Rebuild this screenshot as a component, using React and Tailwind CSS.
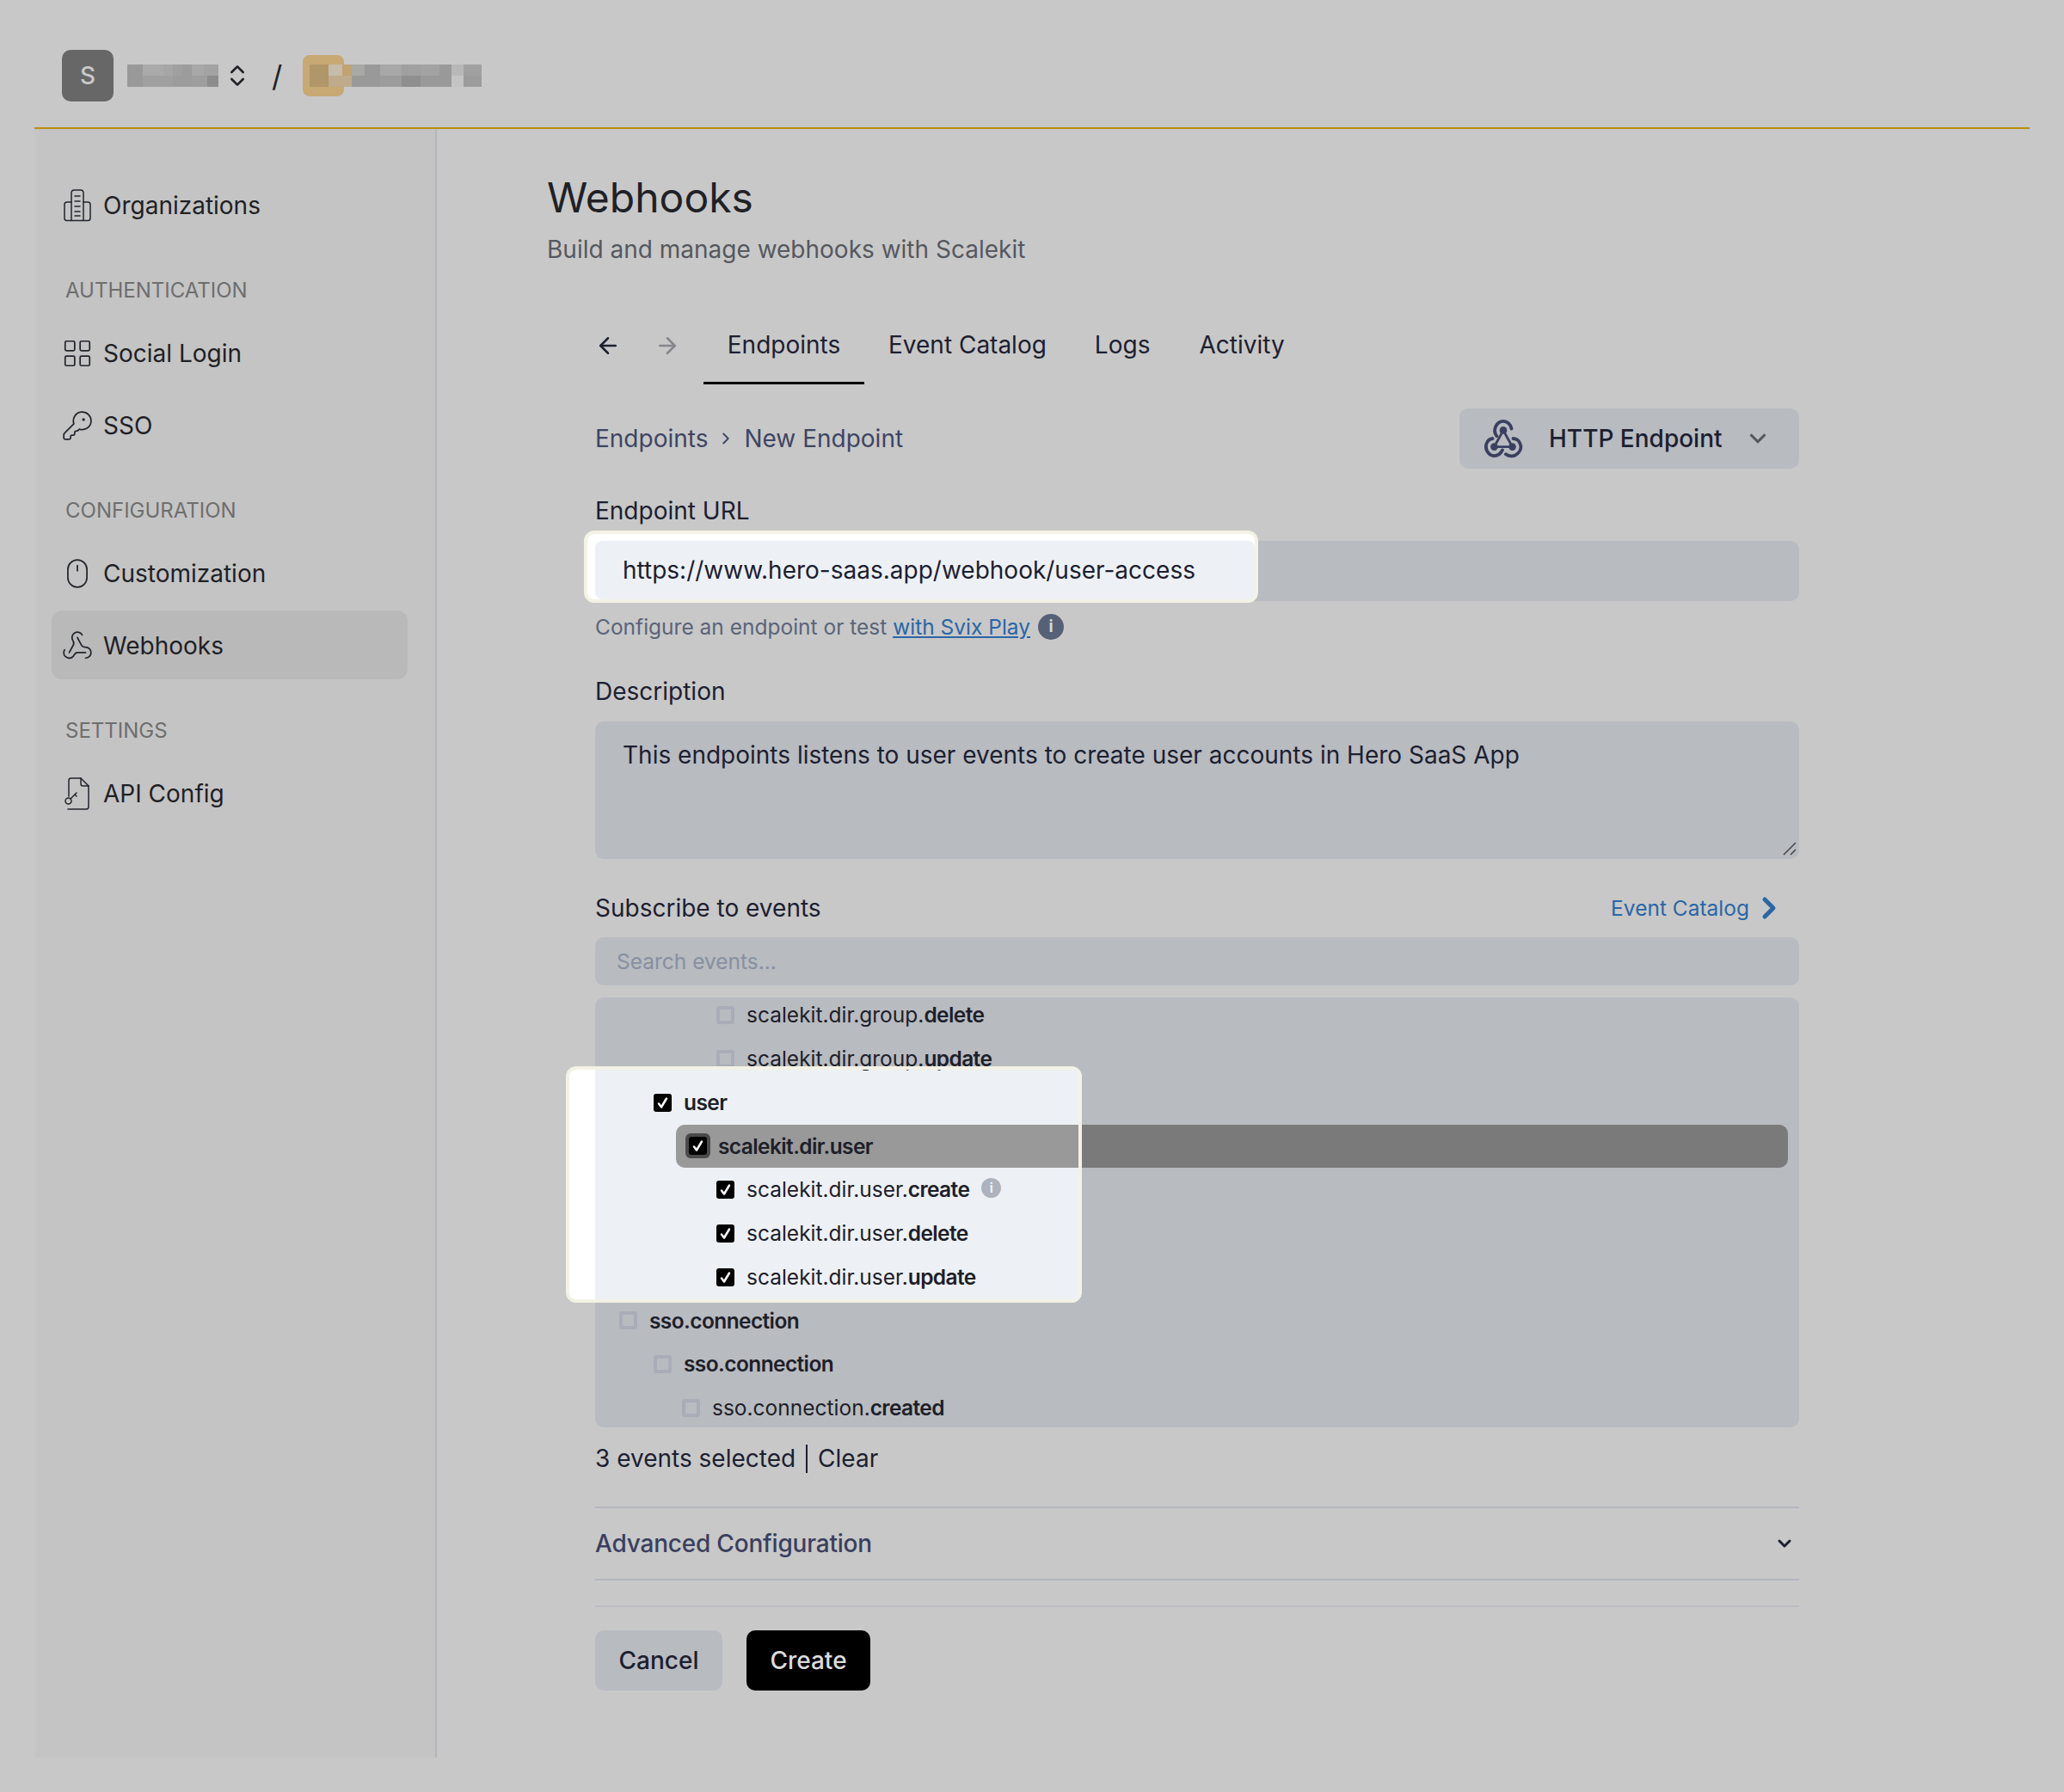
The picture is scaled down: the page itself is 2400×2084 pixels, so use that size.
import { ArrowLeft, ArrowRight, ChevronDown, ChevronRight, ChevronsUpDown, KeyRound, LayoutGrid, Mouse, Webhook } from "lucide-react";

const STRIP_A = [
  [18, "#999999", "#999999"],
  [24, "#aaaaaa", "#a0a0a0"],
  [11, "#a6a6a6", "#a0a0a0"],
  [11, "#a0a0a0", "#9c9c9c"],
  [11, "#9c9c9c", "#9c9c9c"],
  [14, "#a8a8a8", "#9e9e9e"],
  [4, "#a3a3a3", "#9e9e9e"],
  [13, "#a3a3a3", "#8c8c8c"],
];

const STRIP_B = [
  [22, "#b09668", "#b09668"],
  [16, "#c5bda9", "#bfab8b"],
  [11, "#c2a26e", "#bfab8b"],
  [15, "#a8a8a8", "#999999"],
  [18, "#999999", "#999999"],
  [25, "#a8a8a8", "#9c9c9c"],
  [22, "#a0a0a0", "#8f8f8f"],
  [22, "#a3a3a3", "#999999"],
  [14, "#999999", "#999999"],
  [14, "#b8b8b8", "#c4c4c4"],
  [21, "#a0a0a0", "#9c9c9c"],
];

const ROWS = [
  { pad: "pl-[141px]", base: "scalekit.dir.group.", strong: "delete" },
  { pad: "pl-[141px]", base: "scalekit.dir.group.", strong: "update" },
  { pad: "pl-[68px]", strong: "user", checked: true },
  { active: true, strong: "scalekit.dir.user", checked: true },
  { pad: "pl-[141px]", base: "scalekit.dir.user.", strong: "create", checked: true, info: true },
  { pad: "pl-[141px]", base: "scalekit.dir.user.", strong: "delete", checked: true },
  { pad: "pl-[141px]", base: "scalekit.dir.user.", strong: "update", checked: true },
  { pad: "pl-[28px]", strong: "sso.connection" },
  { pad: "pl-[68px]", strong: "sso.connection" },
  { pad: "pl-[101px]", base: "sso.connection.", strong: "created" },
];

function Mosaic({ cells }) {
  return (
    <div className="flex">
      {cells.map(([w, top, bottom], i) => (
        <div key={i} className="flex flex-col" style={{ width: w }}>
          <div className="h-[13px]" style={{ background: top }} />
          <div className="h-[13px]" style={{ background: bottom }} />
        </div>
      ))}
    </div>
  );
}

function BuildingIcon() {
  return (
    <svg viewBox="0 0 32 38" className="h-[38px] w-[32px]" fill="none" stroke="#22252c" strokeWidth="1.5" strokeLinejoin="round" strokeLinecap="round">
      <path d="M9 36.5V4.5C9 2.5 10.5 1 12.5 1h7C21.5 1 23 2.5 23 4.5V36.5" />
      <path d="M9 15H4c-1.7 0-3 1.3-3 3v15.5C1 35 2 36.5 3.5 36.5h25c1.5 0 2.500-1.500 2.500-3V18c0-1.7-1.3-3-3-3h-5" />
      <path d="M13 8h6M13 14h6M13 20h6M13 26h6M13 31h6" />
    </svg>
  );
}

function FileKeyIcon() {
  return (
    <svg viewBox="0 0 30 38" className="h-[38px] w-[30px]" fill="none" stroke="#22252c" strokeWidth="1.5" strokeLinejoin="round" strokeLinecap="round">
      <path d="M5 22V3.5C5 2 6 1 7.5 1H19l9 9v24c0 1.8-1 3-2.5 3H4" />
      <path d="M19 1v6.5c0 1.5 1 2.5 2.5 2.5H28" />
      <circle cx="4.5" cy="27.5" r="3.5" />
      <path d="M7 25l7-7M12 20l2 2" />
    </svg>
  );
}

function WebhookBadge() {
  return (
    <svg viewBox="0 0 48 48" className="h-[46px] w-[46px]" fill="none" stroke="#3b4060" strokeWidth="4" strokeLinecap="round">
      <path d="M24 14L13 34L35 34Z" strokeWidth="3" />
      <circle cx="24" cy="14" r="4.5" fill="#3b4060" stroke="none" />
      <circle cx="13" cy="34" r="4.5" fill="#3b4060" stroke="none" />
      <circle cx="35" cy="34" r="4.5" fill="#3b4060" stroke="none" />
      <path d="M16 21C13 17 13 13 15 9C17 5 21 3 24 3C29 3 33 7 34 12" />
      <path d="M11 24C5 25 3 30 3 34C3 40 8 45 13 45C18 45 21 42 23 38" />
      <path d="M27 43C30 45 35 46 39 44C44 41 46 36 45 32C44 27 40 24 36 24" />
    </svg>
  );
}

function NavItem({ icon, label, active }) {
  return (
    <div className={`flex h-[80px] items-center gap-[14px] rounded-[12px] pl-[14px] pt-[1px] text-[28px] text-[#1f2126] ${active ? "bg-[#b9b9b9]" : ""}`}>
      <span className="flex w-[32px] justify-center">{icon}</span>
      <span>{label}</span>
    </div>
  );
}

function SectionLabel({ children }) {
  return <div className="mb-[17px] mt-[45px] flex h-[30px] items-center pl-[16px] text-[24px] text-[#6e6e6e]">{children}</div>;
}

function Box({ checked }) {
  if (checked) {
    return (
      <span className="flex h-[21px] w-[21px] shrink-0 items-center justify-center rounded-[3px] bg-black">
        <svg viewBox="0 0 21 21" className="h-[21px] w-[21px]" fill="none" stroke="#ffffff" strokeWidth="2.5" strokeLinecap="round" strokeLinejoin="round">
          <path d="M6 11.5L9 15.5L15 5.5" />
        </svg>
      </span>
    );
  }
  return <span className="h-[21px] w-[21px] shrink-0 rounded-[3px] border-[4px] border-[#a8adb8]" />;
}

function EventRow({ row, lit }) {
  if (row.active) {
    return (
      <div className="flex h-[50.8px] items-center">
        <div className={`ml-[94px] mr-[13px] flex h-[50px] flex-1 items-center gap-[9px] rounded-[10px] pl-[11px] ${lit ? "bg-[#999999]" : "bg-[#7a7a7a]"}`}>
          <span className="flex h-[29px] w-[29px] items-center justify-center rounded-[6px] bg-[#4a4a4a]">
            <Box checked />
          </span>
          <span className="text-[24.5px] font-semibold tracking-[-0.6px] text-[#1d2029]">{row.strong}</span>
        </div>
      </div>
    );
  }
  return (
    <div className={`flex h-[50.8px] items-center gap-[14px] text-[24.5px] text-[#1d2029] ${row.pad}`}>
      <Box checked={row.checked} />
      <span>
        {row.base}
        <span className="font-semibold tracking-[-0.6px]">{row.strong}</span>
      </span>
      {row.info && (
        <span className="flex h-[23px] w-[23px] -translate-y-[2px] items-center justify-center rounded-full bg-[#adb2bd] text-[15px] font-bold text-[#edf1f5]">i</span>
      )}
    </div>
  );
}

export default function App() {
  return (
    <div className="min-h-[2084px] bg-[#c8c8c8] px-[40px] font-['Inter',sans-serif]">
      {/* Top bar */}
      <header className="flex h-[150px] items-center border-b-2 border-[#b88e0a] pl-[32px] pt-[28px]">
        <div className="flex h-[60px] w-[60px] items-center justify-center rounded-[10px] bg-[#676767] text-[28px] font-medium text-[#c8c8c8]">S</div>
        <div className="ml-[16px]">
          <Mosaic cells={STRIP_A} />
        </div>
        <ChevronsUpDown className="ml-[6px] h-[32px] w-[32px] text-[#1f2126]" strokeWidth={2} />
        <span className="ml-[24px] text-[34px] text-[#1f2126]">/</span>
        <div className="relative ml-[24px] flex h-[48px] w-[48px] items-center rounded-[8px] bg-[#c8a873]">
          <div className="absolute left-[8px]">
            <Mosaic cells={STRIP_B} />
          </div>
        </div>
      </header>

      <div className="flex">
        {/* Sidebar */}
        <aside className="h-[1894px] w-[468px] shrink-0 border-r-2 border-[#b5b5bc] bg-[#c4c4c4] pl-[20px] pr-[32px] pt-[48px]">
          <NavItem icon={<BuildingIcon />} label="Organizations" />
          <SectionLabel>AUTHENTICATION</SectionLabel>
          <div className="flex flex-col gap-[4px]">
            <NavItem icon={<LayoutGrid className="h-[38px] w-[38px] shrink-0 text-[#22252c]" strokeWidth={1.1} />} label="Social Login" />
            <NavItem icon={<KeyRound className="h-[38px] w-[38px] shrink-0 text-[#22252c]" strokeWidth={1.1} />} label="SSO" />
          </div>
          <SectionLabel>CONFIGURATION</SectionLabel>
          <div className="flex flex-col gap-[4px]">
            <NavItem icon={<Mouse className="h-[38px] w-[38px] shrink-0 text-[#22252c]" strokeWidth={1.1} />} label="Customization" />
            <NavItem icon={<Webhook className="h-[38px] w-[38px] shrink-0 text-[#22252c]" strokeWidth={1.1} />} label="Webhooks" active />
          </div>
          <SectionLabel>SETTINGS</SectionLabel>
          <NavItem icon={<FileKeyIcon />} label="API Config" />
        </aside>

        {/* Main */}
        <main className="flex-1 pl-[128px]">
          <h1 className="mt-[50px] h-[60px] text-[48px] leading-[60px] text-[#1f2126]">Webhooks</h1>
          <p className="mt-[10px] h-[40px] text-[28px] leading-[40px] text-[#55585f]">Build and manage webhooks with Scalekit</p>

          <div className="ml-[56px] w-[1400px]">
            {/* Tabs */}
            <div className="mt-[51px] flex h-[86px] items-stretch text-[28px] text-[#1c2030]">
              <div className="flex w-[126px] items-center pb-[4px]">
                <ArrowLeft className="h-[30px] w-[30px] text-[#1c2030]" strokeWidth={2} />
                <ArrowRight className="ml-[39px] h-[30px] w-[30px] text-[#85868c]" strokeWidth={2} />
              </div>
              <div className="flex w-[187px] items-center justify-center border-b-[3px] border-black pb-[3px]">Endpoints</div>
              <div className="ml-[28px] flex items-center pb-[6px]">Event Catalog</div>
              <div className="ml-[56px] flex items-center pb-[6px]">Logs</div>
              <div className="ml-[57px] flex items-center pb-[6px]">Activity</div>
            </div>

            {/* Breadcrumb + type select */}
            <div className="mt-[28px] flex h-[70px] items-center justify-between">
              <div className="flex items-center text-[28px] text-[#3e4563]">
                <span>Endpoints</span>
                <ChevronRight className="mx-[10px] h-[22px] w-[22px] text-[#3e4563]" strokeWidth={2} />
                <span>New Endpoint</span>
              </div>
              <div className="flex h-[70px] w-[395px] items-center rounded-[10px] bg-[#b8bbc0] pl-[28px]">
                <WebhookBadge />
                <span className="ml-[30px] text-[28px] font-medium text-[#1c2030]">HTTP Endpoint</span>
                <ChevronDown className="ml-[26px] h-[30px] w-[30px] text-[#55585f]" strokeWidth={2.5} />
              </div>
            </div>

            {/* Endpoint URL */}
            <div className="mb-[17px] mt-[31px] h-[36px] text-[28px] leading-[36px] text-[#1c2030]">Endpoint URL</div>
            <div className="relative h-[70px] rounded-[10px] bg-[#b8bbc0]">
              <div className="absolute -left-[13px] -top-[12px] flex h-[84px] w-[784px] rounded-[12px] border-[4px] border-[#f3f2e6] bg-white pl-[9px] pt-[8px]">
                <div className="flex flex-1 items-center rounded-[8px] bg-[#edf1f5] pl-[32px] text-[28px] text-[#1c2030]">
                  https://www.hero-saas.app/webhook/user-access
                </div>
              </div>
            </div>
            <div className="mt-[12px] flex h-[36px] items-center text-[24.5px] text-[#5a6478]">
              <span>Configure an endpoint or test&nbsp;</span>
              <span className="text-[#2a66a6] underline">with Svix Play</span>
              <span className="ml-[9px] flex h-[30px] w-[30px] items-center justify-center rounded-full bg-[#566076] text-[19px] font-bold text-[#d4d8de]">i</span>
            </div>

            {/* Description */}
            <div className="mb-[17px] mt-[39px] h-[36px] text-[28px] leading-[36px] text-[#1c2030]">Description</div>
            <div className="relative h-[160px] rounded-[10px] bg-[#b8bbc0] pl-[32px] pt-[20px] text-[28px] leading-[38px] text-[#1c2030]">
              This endpoints listens to user events to create user accounts in Hero SaaS App
              <svg viewBox="0 0 16 16" className="absolute bottom-[4px] right-[3px] h-[16px] w-[16px]" stroke="#444444" strokeWidth="1.5">
                <path d="M1 15L15 1M9 15L15 9" />
              </svg>
            </div>

            {/* Subscribe to events */}
            <div className="mt-[39px] flex h-[36px] items-center justify-between pr-[15px] text-[28px] text-[#1c2030]">
              <span>Subscribe to events</span>
              <span className="flex items-center text-[24.5px] text-[#2a66a6]">
                Event Catalog
                <ChevronRight className="ml-[3px] h-[40px] w-[40px]" strokeWidth={3} />
              </span>
            </div>
            <div className="mt-[16px] flex h-[56px] items-center rounded-[10px] bg-[#b8bbc0] pl-[25px] text-[24.5px] text-[#8690a0]">Search events...</div>

            <div className="relative mt-[14px] h-[500px] rounded-[10px] bg-[#b8bbc0]">
              <div className="h-full overflow-hidden rounded-[10px]">
                <div className="-mt-[5px]">
                  {ROWS.map((row, i) => (
                    <EventRow key={i} row={row} />
                  ))}
                </div>
              </div>
              {/* Spotlight over the selected group */}
              <div className="absolute -left-[34px] top-[80px] h-[275px] w-[600px] rounded-[12px] border-[4px] border-[#f3f2e6] bg-white pl-[30px]">
                <div className="h-full overflow-hidden bg-[#edf1f5]">
                  <div className="-mt-[38px] w-[1400px]">
                    {ROWS.slice(1, 7).map((row, i) => (
                      <EventRow key={i} row={row} lit />
                    ))}
                  </div>
                </div>
              </div>
            </div>

            <div className="mt-[18px] flex h-[36px] items-center text-[28px] text-[#1c2030]">
              <span>3 events selected</span>
              <span className="mx-[12px] h-[33px] w-[2px] bg-[#1c2030]" />
              <span>Clear</span>
            </div>

            {/* Advanced */}
            <div className="mt-[38px] flex h-[86px] items-center justify-between border-y-2 border-[#b3b6bd] pr-[5px] text-[28px] font-medium tracking-[-0.2px] text-[#3a3f5e]">
              <span>Advanced Configuration</span>
              <ChevronDown className="h-[24px] w-[24px] text-[#1c2030]" strokeWidth={3} />
            </div>

            <div className="mt-[29px] h-[2px] bg-[#bcbdc3]" />

            <div className="mt-[27px] flex gap-[28px] text-[28px] font-medium">
              <button className="flex h-[70px] w-[148px] items-center justify-center rounded-[10px] bg-[#b8bbc0] text-[#1c2030]">Cancel</button>
              <button className="flex h-[70px] w-[144px] items-center justify-center rounded-[10px] bg-black text-[#dcdcdc]">Create</button>
            </div>
          </div>
        </main>
      </div>
    </div>
  );
}
